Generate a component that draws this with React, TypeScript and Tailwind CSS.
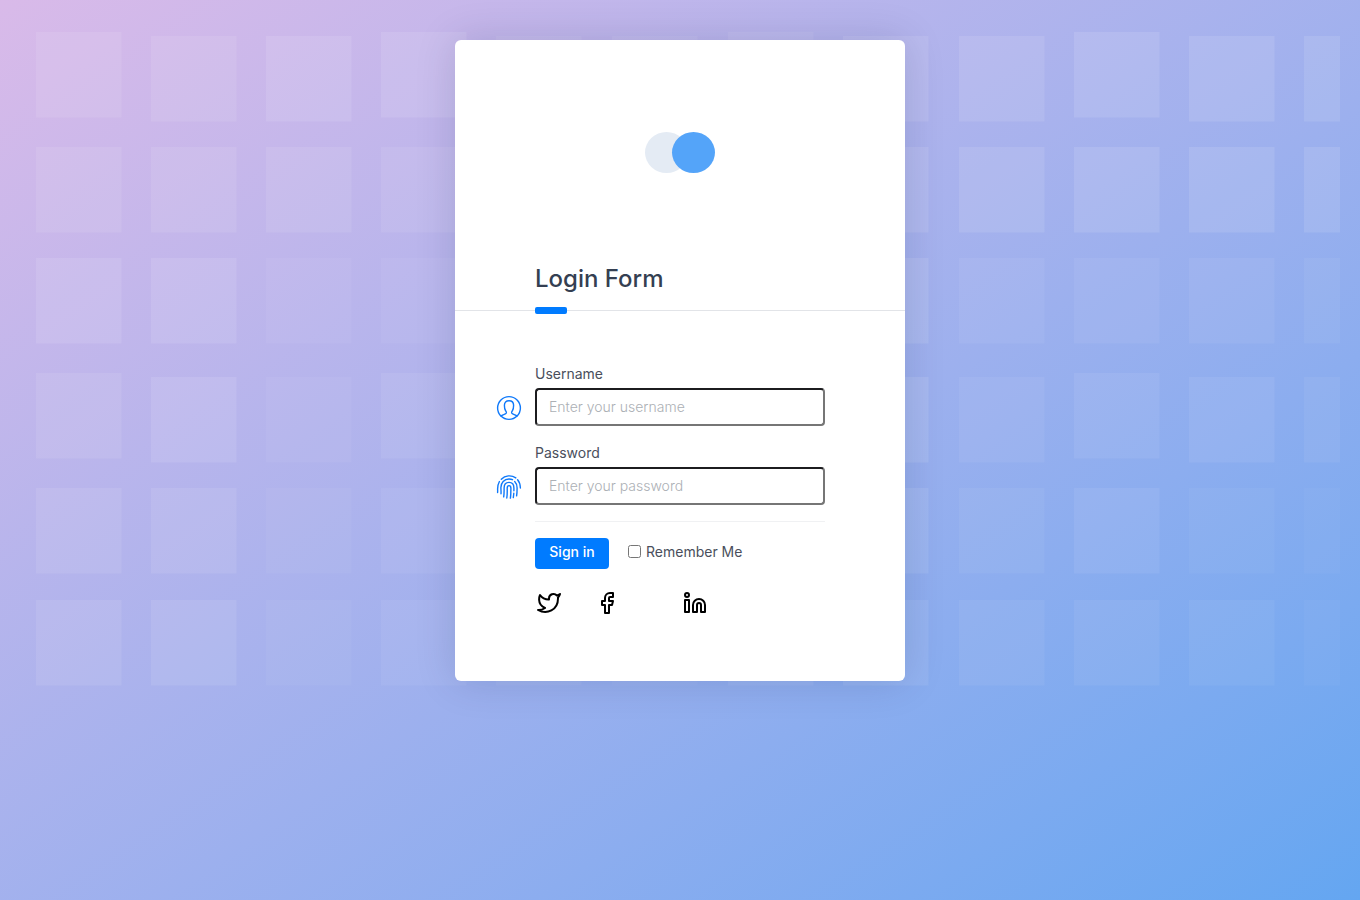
import type { ReactNode } from "react";
import { Facebook, Linkedin } from "lucide-react";

const TILE_X = [16, 131, 246, 361, 476, 592, 708, 823, 939, 1054, 1169, 1284];
const TILE_Y = [36, 147, 258, 377, 488, 600];

// White opacity of every background tile, row by row.
const TILE_OPACITY = [
  [0.09, 0.09, 0.1, 0.1, 0.07, 0.07, 0.08, 0.1, 0.1, 0.11, 0.11, 0.1],
  [0.09, 0.09, 0.09, 0.08, 0.08, 0.08, 0.09, 0.1, 0.1, 0.11, 0.11, 0.11],
  [0.1, 0.1, 0.05, 0.05, 0.05, 0.05, 0.06, 0.1, 0.06, 0.06, 0.06, 0.05],
  [0.09, 0.1, 0.05, 0.07, 0.06, 0.06, 0.06, 0.1, 0.06, 0.07, 0.07, 0.06],
  [0.09, 0.09, 0.04, 0.06, 0.06, 0.06, 0.06, 0.09, 0.05, 0.07, 0.04, 0.03],
  [0.09, 0.09, 0.04, 0.06, 0.05, 0.03, 0.07, 0.08, 0.06, 0.06, 0.05, 0.03],
];

function tileTop(row: number, column: number) {
  return row % 3 === 0 && column % 3 === 0 ? TILE_Y[row] - 4 : TILE_Y[row];
}

function BackgroundTiles() {
  return (
    <div aria-hidden="true" className="pointer-events-none absolute inset-x-5 top-0">
      <svg className="block h-[720px] w-full">
        {TILE_OPACITY.map((row, r) =>
          row.map((opacity, c) => (
            <rect key={`${r}-${c}`} x={TILE_X[c]} y={tileTop(r, c)} width="85.5" height="85.5" fill="#fff" fillOpacity={opacity} />
          )),
        )}
      </svg>
    </div>
  );
}

function UserIcon() {
  return (
    <svg width="26" height="26" viewBox="-1 -1 26 26" fill="none" stroke="currentColor" strokeWidth="1.4" strokeLinecap="round" strokeLinejoin="round">
      <circle cx="12" cy="12" r="11.4" />
      <path d="M4 20c1.400-1.500 4.800-1.500 5.300-3 .3-1.100-.2-1.600-.8-2.500-.9-1.300-1.100-3.200-1.100-5.200C7.400 6.300 9 4.800 12 4.800s4.600 1.500 4.600 4.500c0 2-.2 3.900-1.100 5.200-.6.900-1.100 1.400-.8 2.500.5 1.500 3.900 1.500 5.300 3" />
    </svg>
  );
}

function FingerprintIcon() {
  return (
    <svg width="26" height="26" viewBox="-1 -1 26 26" fill="none" stroke="currentColor" strokeWidth="1.4" strokeLinecap="round">
      <path d="M4.300 4.300A11.200 11.200 0 0 1 18.800 2.900" />
      <path d="M20.600 4.700c2 2.300 2.700 5 2.800 8.300" />
      <path d="M2.400 6.500C.9 9.200.5 11.400.6 14c.1 1.400.1 2.500 0 3.500" />
      <path d="M4 18.800c.2-2-.1-3.800-.1-6.300 0-4.800 3.300-8.500 8.100-8.500 1.300 0 2.500.2 3.500.7" />
      <path d="M17.700 6.400c1.700 1.600 2.400 3.900 2.400 6.600 0 2.700 0 5.200-.5 7.800" />
      <path d="M6.700 21.800c.5-2.600.4-5.100.4-8.900 0-3.300 1.800-5.500 4.900-5.500s4.900 2.200 4.900 5.500v2.900" />
      <path d="M16.800 18.300c-.1 1.600-.3 2.900-.5 4.300" />
      <path d="M9.800 23c.5-3 .5-5.900.4-9.800 0-1.600.6-2.600 1.800-2.600s1.900 1 1.900 2.600c0 3.900 0 6.700-.5 9.900" />
    </svg>
  );
}

function TwitterIcon() {
  return (
    <svg width="24" height="24" viewBox="0 0 24 24" fill="none" stroke="currentColor" strokeWidth="2" strokeLinecap="round" strokeLinejoin="round">
      <path d="M23 3a10.900 10.900 0 0 1-3.140 1.530 4.480 4.480 0 0 0-7.860 3v1A10.660 10.660 0 0 1 3 4s-4 9 5 13a11.640 11.640 0 0 1-7 2c9 5 20 0 20-11.500a4.500 4.500 0 0 0-.08-.83A7.720 7.720 0 0 0 23 3z" />
    </svg>
  );
}

type FieldProps = {
  id: string;
  label: string;
  type: string;
  placeholder: string;
  icon: ReactNode;
};

function Field({ id, label, type, placeholder, icon }: FieldProps) {
  return (
    <div>
      <label htmlFor={id} className="block h-6 text-sm leading-5">
        {label}
      </label>
      <div className="relative">
        <span className="absolute top-[7px] -left-[39px] text-[#0f79fa]">{icon}</span>
        <input
          id={id}
          type={type}
          placeholder={placeholder}
          className="block h-[38px] w-full rounded border-2 border-t-[#1c1c1f] border-r-[#767676] border-b-[#767676] border-l-[#1c1c1f] bg-white px-3 pb-0.5 text-sm font-light placeholder:text-[#acb0b5]"
        />
      </div>
    </div>
  );
}

export default function App() {
  return (
    <main className="relative flex min-h-screen items-start justify-center bg-linear-to-br from-[#d9bae9] to-[#64a6f1] px-4 py-10 font-['Inter',sans-serif] text-[#4a4f5c]">
      <BackgroundTiles />
      <section className="relative w-full max-w-[450px] rounded-md bg-white pb-[66px] shadow-[0_0_40px_rgba(8,21,66,0.15)]">
        <div className="flex justify-center pt-[92px]">
          <svg width="70" height="41" viewBox="0 0 70 41" role="img" aria-label="Logo">
            <ellipse cx="21.5" cy="20.5" rx="21.5" ry="20.5" fill="#e4ebf4" />
            <ellipse cx="48.5" cy="20.5" rx="21.5" ry="20.5" fill="#54a4f9" />
          </svg>
        </div>
        <header className="relative mt-[90px] border-b border-[#e2e4e8] px-20 pb-[15px]">
          <h1 className="text-2xl leading-8 font-medium text-[#343f52]">Login Form</h1>
          <span className="absolute -bottom-1 left-20 h-[7px] w-8 rounded-xs bg-[#007bff]" />
        </header>
        <form className="px-20 pt-[53px]" onSubmit={(e) => e.preventDefault()}>
          <div className="flex flex-col gap-[17px]">
            <Field id="username" label="Username" type="text" placeholder="Enter your username" icon={<UserIcon />} />
            <Field id="password" label="Password" type="password" placeholder="Enter your password" icon={<FingerprintIcon />} />
          </div>
          <div className="mt-4 flex items-center border-t border-[#f0f1f3] pt-4">
            <button type="submit" className="h-[31px] w-[74px] rounded bg-[#007bff] pb-1 text-sm font-medium text-white">
              Sign in
            </button>
            <label htmlFor="remember" className="ml-[19px] flex items-center gap-[5px] pb-1 text-sm">
              <input id="remember" type="checkbox" className="size-[13px]" />
              Remember Me
            </label>
          </div>
          <div className="mt-[22px] flex pl-0.5 text-black">
            <a href="#twitter" aria-label="Twitter">
              <TwitterIcon />
            </a>
            <a href="#facebook" aria-label="Facebook" className="ml-[34px]">
              <Facebook size={24} />
            </a>
            <a href="#linkedin" aria-label="LinkedIn" className="ml-16">
              <Linkedin size={24} />
            </a>
          </div>
        </form>
      </section>
    </main>
  );
}
